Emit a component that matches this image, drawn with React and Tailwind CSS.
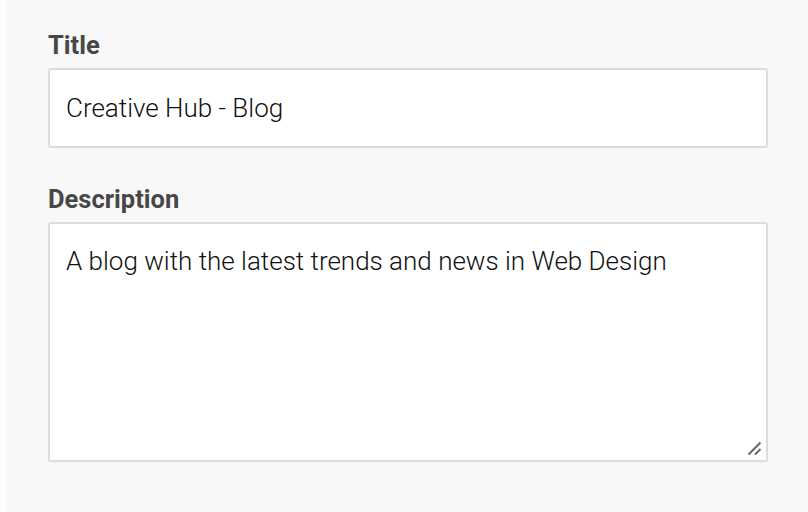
export default function App() {
  return (
    <div className="flex h-[512px] w-[808px] bg-[#fdfdfd]" style={{ fontFamily: 'Roboto, "Noto Sans", sans-serif' }}>
      <div className="ml-[6px] flex-1 bg-[#f8f8f8] pl-[42px] pr-[40px] pt-[30px]">
        <label className="block text-[25.5px] font-bold leading-[30px] text-[#474747]">Title</label>
        <div className="mt-[8px] flex h-[80px] w-[720px] items-center rounded-[3px] border-2 border-[#dcdcdc] bg-white px-[16px]">
          <span className="text-[26px] font-light text-[#111]">Creative Hub - Blog</span>
        </div>
        <label className="mt-[36px] block text-[25.5px] font-bold leading-[30px] text-[#474747]">Description</label>
        <div className="relative mt-[8px] h-[240px] w-[720px] rounded-[3px] border-2 border-[#dcdcdc] bg-white px-[16px] pt-[21px]">
          <span className="text-[26px] font-light leading-[32px] text-[#111]">A blog with the latest trends and news in Web Design</span>
          <svg className="absolute bottom-[2px] right-[2px]" width="18" height="18" viewBox="0 0 18 18">
            <line x1="2.5" y1="14.5" x2="14.5" y2="2.5" stroke="#666" strokeWidth="2" />
            <line x1="9" y1="14.5" x2="14.5" y2="9" stroke="#666" strokeWidth="2" />
          </svg>
        </div>
      </div>
    </div>
  );
}
